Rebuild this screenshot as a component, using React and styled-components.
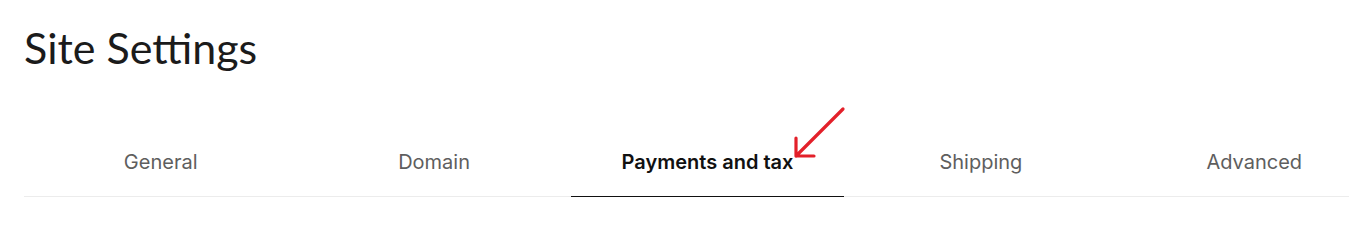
import React, { useState } from "react";
import styled, { createGlobalStyle } from "styled-components";

const Global = createGlobalStyle`
  html, body { margin: 0; padding: 0; background: #fff; overflow: hidden; }
  body { font-family: "Lato", "Noto Sans", sans-serif; }
`;

const Page = styled.div`
  padding: 22px 0 0 24px;
  width: 1367px;
`;

const Title = styled.h1`
  margin: 0;
  font-family: "Lato", "Noto Sans", sans-serif;
  font-weight: 400;
  font-size: 43px;
  line-height: 52px;
  color: #1b1b1b;
`;

const TabList = styled.div`
  display: grid;
  grid-template-columns: repeat(5, 1fr);
  margin-top: 62px;
  border-bottom: 1px solid #ececec;
`;

const TabWrap = styled.div`
  position: relative;
`;

const Tab = styled.button`
  display: block;
  width: 100%;
  background: none;
  border: none;
  padding: 14px 0 22px;
  margin-bottom: -1px;
  font-family: "Inter", "Noto Sans", sans-serif;
  font-size: 20px;
  line-height: 24px;
  font-weight: ${(p) => (p.$active ? 600 : 400)};
  color: ${(p) => (p.$active ? "#111" : "#5e5e5e")};
  border-bottom: 1px solid ${(p) => (p.$active ? "#111" : "transparent")};
  cursor: pointer;
`;

const Arrow = styled.svg`
  position: absolute;
  left: 222px;
  top: -30px;
  width: 54px;
  height: 54px;
  pointer-events: none;
`;

const tabs = ["General", "Domain", "Payments and tax", "Shipping", "Advanced"];

export default function App() {
  const [active, setActive] = useState(2);
  return (
    <>
      <Global />
      <Page>
        <Title>Site Settings</Title>
        <TabList>
          {tabs.map((t, i) => (
            <TabWrap key={t}>
              <Tab $active={i === active} onClick={() => setActive(i)}>
                {t}
              </Tab>
              {i === 2 && (
                <Arrow viewBox="0 0 54 54">
                  <path
                    d="M50 3 L3 50 M3 32 L3 50 L21 50"
                    fill="none"
                    stroke="#e3202a"
                    strokeWidth="3.2"
                    strokeLinecap="round"
                    strokeLinejoin="round"
                  />
                </Arrow>
              )}
            </TabWrap>
          ))}
        </TabList>
      </Page>
    </>
  );
}
